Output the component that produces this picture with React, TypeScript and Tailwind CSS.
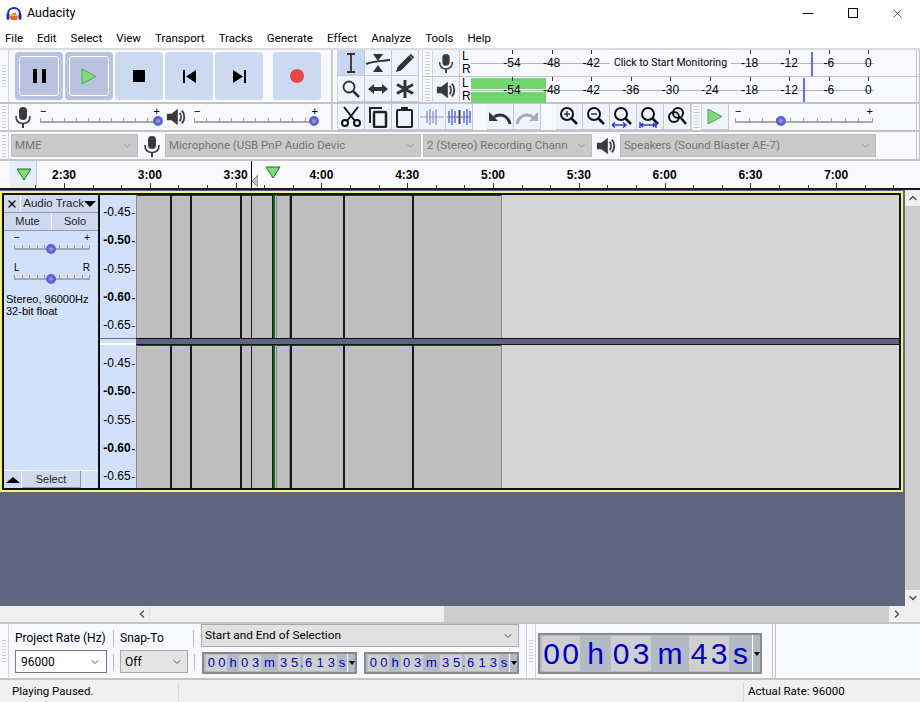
import { ChevronDown, ChevronLeft, ChevronRight, ChevronUp, X } from "lucide-react";
import type { ReactNode } from "react";

const RULER = ["2:30", "3:00", "3:30", "4:00", "4:30", "5:00", "5:30", "6:00", "6:30", "7:00"];
const MENU = ["File", "Edit", "Select", "View", "Transport", "Tracks", "Generate", "Effect", "Analyze", "Tools", "Help"];
const DB_BOTTOM = ["-54", "-48", "-42", "-36", "-30", "-24", "-18", "-12", "-6", "0"];
const TRACK_DB: [string, boolean][] = [["-0.45", false], ["-0.50", true], ["-0.55", false], ["-0.60", true], ["-0.65", false]];

type Cell = { t: string; w: number; light?: boolean };

const SMALL_TIME: Cell[] = [
  { t: "", w: 2 },
  { t: "00", w: 21, light: true },
  { t: "h", w: 12 },
  { t: "03", w: 22, light: true },
  { t: "m", w: 17 },
  { t: "35", w: 22, light: true },
  { t: ".", w: 3 },
  { t: "613", w: 34, light: true },
  { t: "s", w: 10 },
];

const BIG_TIME: Cell[] = [
  { t: "", w: 2 },
  { t: "00", w: 38, light: true },
  { t: "h", w: 31 },
  { t: "03", w: 40, light: true },
  { t: "m", w: 38 },
  { t: "43", w: 40, light: true },
  { t: "s", w: 23 },
];

// ---------------------------------------------------------------------------
// Small pieces
// ---------------------------------------------------------------------------

function Grip({ className = "w-[9px] border-r" }: { className?: string }) {
  return (
    <div className={`flex shrink-0 flex-col justify-center gap-[2px] self-stretch border-[#d4d4d4] px-[2px] ${className}`}>
      {Array.from({ length: 8 }).map((_, i) => (
        <div className="h-px bg-[#cfcfcf]" key={i} />
      ))}
    </div>
  );
}

function EndLines() {
  return <div className="ml-auto w-[4px] shrink-0 self-stretch border-x border-[#c4c4c4]" />;
}

function Mic({ size = 22 }: { size?: number }) {
  return (
    <svg fill="none" height={size} viewBox="0 0 22 22" width={size}>
      <rect fill="#3a3a3a" height="13" rx="4" width="8" x="7" y="1" />
      <path d="M4 10c0 5 3 7.500 7 7.500s7-2.500 7-7.500" stroke="#3a3a3a" strokeWidth="1.600" />
      <path d="M11 17.500V22" stroke="#3a3a3a" strokeWidth="2" />
    </svg>
  );
}

function Speaker({ size = 20 }: { size?: number }) {
  return (
    <svg fill="none" height={size} viewBox="0 0 22 22" width={size}>
      <path d="M1 7.500h5L13 2v18l-7-5.500H1z" fill="#3a3a3a" />
      <path d="M15 6.500c2 2.500 2 6.500 0 9M17.500 4c3.500 4 3.500 10 0 14" stroke="#3a3a3a" strokeWidth="2" />
    </svg>
  );
}

function Ticks({ className }: { className: string }) {
  return (
    <div className={`absolute right-0 left-0 flex justify-between ${className}`}>
      {Array.from({ length: 11 }).map((_, i) => (
        <div className="h-[3px] w-px bg-[#9a9a9a]" key={i} />
      ))}
    </div>
  );
}

function Knob({ className, left }: { className: string; left: number }) {
  return (
    <div
      className={`absolute h-[10px] w-[10px] rounded-full border-[3px] border-[#5a62e0] bg-[#9a9ab0] ${className}`}
      style={{ left }}
    />
  );
}

function TransportButton({ active, children }: { active?: boolean; children: ReactNode }) {
  return (
    <div
      className={`flex h-[48px] w-[48px] shrink-0 items-center justify-center rounded-[4px] ${active ? "bg-[#b9c3e0]" : "bg-[#cdd9f1]"}`}
    >
      {active ? (
        <div className="flex h-[40px] w-[40px] items-center justify-center rounded-[3px] border border-white">
          {children}
        </div>
      ) : (
        children
      )}
    </div>
  );
}

function ToolButton({ active, children }: { active?: boolean; children: ReactNode }) {
  return (
    <div
      className={`flex h-[26px] w-[27px] shrink-0 items-center justify-center border-r border-b border-[#c4c8d4] ${active ? "bg-[#c8d6f0]" : "bg-[#eef3fe]"}`}
    >
      {children}
    </div>
  );
}

function Slider({ thumb, width }: { thumb: number; width: number }) {
  return (
    <div className="relative h-[26px] shrink-0 font-['Liberation_Sans',sans-serif]" style={{ width }}>
      <span className="absolute top-[1px] left-0 text-[11px] leading-[12px] text-black">−</span>
      <span className="absolute top-[1px] right-0 text-[11px] leading-[12px] text-black">+</span>
      <Ticks className="top-[14px]" />
      <div className="absolute top-[17px] right-0 left-0 h-[2px] bg-[#a8a8a8]" />
      <Knob className="top-[12px]" left={thumb} />
    </div>
  );
}

function DeviceSelect({ label, width }: { label: string; width: number }) {
  return (
    <div
      className="flex h-[23px] shrink-0 items-center justify-between border border-[#bdbdbd] bg-[#c9c9c9] pr-[3px] pl-[3px] text-[11.500px] text-[#757575]"
      style={{ width }}
    >
      <span className="overflow-hidden whitespace-nowrap">{label}</span>
      <ChevronDown className="shrink-0 text-[#a8a8a8]" size={13} />
    </div>
  );
}

function DbLabel({ index, text }: { index: number; text: string }) {
  const x = 41 + index * 39.600;
  return (
    <>
      <div className="absolute top-0 h-[4px] w-px bg-[#333]" style={{ left: x }} />
      <span
        className="absolute top-[6px] -translate-x-1/2 font-['Liberation_Sans',sans-serif] text-[12px] leading-[14px] text-black"
        style={{ left: x }}
      >
        {text}
      </span>
    </>
  );
}

function Digits({ cells, big }: { cells: Cell[]; big?: boolean }) {
  return (
    <div
      className={`flex shrink-0 items-stretch border-2 border-[#8a8a8a] bg-[#b4b9c6] font-['Liberation_Sans',sans-serif] text-[#0000c0] ${big ? "h-[41px] w-[224px] text-[30px]" : "h-[22px] w-[155px] text-[13px]"}`}
    >
      <div className="flex flex-1 py-[1px]">
        {cells.map((c, i) => (
          <div className={`flex shrink-0 ${c.light ? "bg-[#cfcfcf]" : ""}`} key={i} style={{ width: c.w }}>
            {c.t.split("").map((ch, j) => (
              <span className="flex flex-1 items-center justify-center" key={j}>
                {ch}
              </span>
            ))}
          </div>
        ))}
      </div>
      <div className="flex w-[8px] shrink-0 items-center justify-center border-l border-white">
        <div className="h-0 w-0 border-x-[3px] border-t-[4px] border-x-transparent border-t-black" />
      </div>
    </div>
  );
}

function GreenTriangle() {
  return (
    <svg height="13" viewBox="0 0 16 13" width="16">
      <path d="M1 1h14L8 12z" fill="#7ddc78" stroke="#2f6b2c" />
    </svg>
  );
}

function PlayGlyph() {
  return (
    <svg height="17" viewBox="0 0 16 17" width="16">
      <path d="M1 1l14 7.500L1 16z" fill="#7ddc78" stroke="#5e9c5c" />
    </svg>
  );
}

function ZoomIcon({ sign, bar }: { sign?: "+" | "-"; bar?: "fit" | "sel" }) {
  return (
    <svg fill="none" height="22" viewBox="0 0 22 22" width="22">
      <circle cx="9" cy="8" r="6" stroke="#111" strokeWidth="2" />
      <path d="M13.500 12.500 19 18" stroke="#111" strokeWidth="2.500" />
      {sign && <path d="M6 8h6" stroke="#333" strokeWidth="1.500" />}
      {sign === "+" && <path d="M9 5v6" stroke="#333" strokeWidth="1.500" />}
      {bar === "fit" && <path d="M0 19h14M3 16.500 0 19l3 2.500M11 16.500l3 2.500-3 2.500" stroke="#2b3ccf" strokeWidth="1.500" />}
      {bar === "sel" && <path d="M1 19h16M1 16v6M17 16v6M4 17l-2 2 2 2M14 17l2 2-2 2" stroke="#2b3ccf" strokeWidth="1.500" />}
    </svg>
  );
}

function TrackSlider({ left, right, className }: { left: string; right: string; className: string }) {
  return (
    <>
      <div className={`flex h-[11px] justify-between pr-[8px] pl-[10px] text-[10px] leading-[11px] text-black ${className}`}>
        <span>{left}</span>
        <span>{right}</span>
      </div>
      <div className="relative mr-[8px] ml-[10px] h-[12px]">
        <Ticks className="top-[2px]" />
        <div className="absolute top-[5px] right-0 left-0 h-[2px] bg-[#a8a8a8]" />
        <Knob className="top-[1px]" left={32} />
      </div>
    </>
  );
}

// ---------------------------------------------------------------------------
// Regions
// ---------------------------------------------------------------------------

function TitleBar() {
  return (
    <div className="flex h-[26px] items-center bg-white">
      <svg className="ml-[6px]" height="16" viewBox="0 0 16 16" width="16">
        <path d="M2 9C2 1 14 1 14 9" fill="none" stroke="#1c2fb0" strokeWidth="2" />
        <rect fill="#1c2fb0" height="7" rx="2" width="3" x="0.500" y="8" />
        <rect fill="#1c2fb0" height="7" rx="2" width="3" x="12.500" y="8" />
        <path d="M4 11l1-2 1 1 1-3 1 2 1-2 1 2 1 1 1 1v1l-1 3H5l-1-3z" fill="#e8622a" />
        <path d="M4 10.500h8" stroke="#f4c92a" strokeWidth="1.200" />
      </svg>
      <span className="ml-[5px] text-[12.500px] text-black">Audacity</span>
      <div className="ml-auto flex h-full items-center">
        <div className="flex w-[45px] justify-center">
          <div className="h-px w-[10px] bg-black" />
        </div>
        <div className="flex w-[45px] justify-center">
          <div className="h-[10px] w-[10px] border border-black" />
        </div>
        <div className="flex w-[45px] justify-center">
          <X color="#000" size={15} strokeWidth={1} />
        </div>
      </div>
    </div>
  );
}

function MenuBar() {
  return (
    <div className="flex h-[22px] items-center gap-[14px] bg-white pt-[4px] pl-[5px] text-[11.500px] text-black">
      {MENU.map((m) => (
        <span key={m}>{m}</span>
      ))}
    </div>
  );
}

function TransportToolbar() {
  return (
    <div className="flex h-[54px] items-center border-r border-b-2 border-[#c4c4c4]">
      <Grip />
      <div className="ml-[6px] flex gap-[2px]">
        <TransportButton active>
          <div className="flex gap-[5px]">
            <div className="h-[14px] w-[4px] bg-black" />
            <div className="h-[14px] w-[4px] bg-black" />
          </div>
        </TransportButton>
        <TransportButton active>
          <PlayGlyph />
        </TransportButton>
        <TransportButton>
          <div className="h-[12px] w-[12px] bg-black" />
        </TransportButton>
        <TransportButton>
          <svg height="13" viewBox="0 0 13 13" width="13">
            <path d="M0 0h2v13H0zM13 0v13L3 6.500z" />
          </svg>
        </TransportButton>
        <TransportButton>
          <svg height="13" viewBox="0 0 13 13" width="13">
            <path d="M11 0h2v13h-2zM0 0v13l10-6.500z" />
          </svg>
        </TransportButton>
        <div className="ml-[8px]">
          <TransportButton>
            <div className="h-[14px] w-[14px] rounded-full bg-[#e84545]" />
          </TransportButton>
        </div>
      </div>
    </div>
  );
}

function MixerToolbar() {
  return (
    <div className="flex h-[28px] items-center border-r border-b-2 border-[#c4c4c4]">
      <Grip />
      <div className="flex w-[28px] justify-center">
        <Mic />
      </div>
      <div className="ml-[3px]">
        <Slider thumb={113} width={120} />
      </div>
      <div className="ml-[6px]">
        <Speaker />
      </div>
      <div className="ml-[8px]">
        <Slider thumb={115} width={124} />
      </div>
    </div>
  );
}

function ToolsToolbar() {
  return (
    <div className="flex h-[54px] w-[90px] shrink-0 border-b-2 border-[#c4c4c4]">
      <Grip className="w-[6px] border-x" />
      <div className="grid h-[52px] grid-cols-[repeat(3,27px)]">
        <ToolButton active>
          <svg height="20" viewBox="0 0 12 20" width="12">
            <path d="M2 1h8M2 19h8M6 1v18" fill="none" stroke="#333" strokeWidth="1.800" />
          </svg>
        </ToolButton>
        <ToolButton>
          <svg height="20" viewBox="0 0 26 20" width="26">
            <path d="M8 1h10l-5 7zM8 19h10l-5-7z" fill="#333" />
            <path d="M1 11c6-3 16-3 24-4" fill="none" stroke="#333" strokeWidth="2" />
          </svg>
        </ToolButton>
        <ToolButton>
          <svg height="20" viewBox="0 0 20 20" width="20">
            <path d="M1 19l1.500-5L14 2.500 17.500 6 6 17.500z" fill="#333" />
            <path d="M15 1.500l3.500 3.500" stroke="#333" strokeWidth="2" />
          </svg>
        </ToolButton>
        <ToolButton>
          <svg fill="none" height="20" viewBox="0 0 20 20" width="20">
            <circle cx="8" cy="8" r="5.500" stroke="#333" strokeWidth="1.800" />
            <path d="M12 12l6 6" stroke="#333" strokeWidth="2.500" />
          </svg>
        </ToolButton>
        <ToolButton>
          <svg height="14" viewBox="0 0 22 14" width="22">
            <path d="M1 7l6-5v3h8V2l6 5-6 5V9H7v3z" fill="#333" />
          </svg>
        </ToolButton>
        <ToolButton>
          <svg height="20" viewBox="0 0 20 20" width="20">
            <path d="M10 1v18M2 5.500l16 9M18 5.500l-16 9" stroke="#333" strokeWidth="3" />
          </svg>
        </ToolButton>
      </div>
    </div>
  );
}

function MeterRow({ icon, children, className }: { icon: ReactNode; children: ReactNode; className: string }) {
  return (
    <div className={`flex border-[#c4c4c4] ${className}`}>
      <Grip className="w-[11px] border-x" />
      <div className="flex w-[27px] shrink-0 items-center justify-center border-r border-[#c4c8d4] bg-[#eef3fe]">
        {icon}
      </div>
      <div className="flex w-[11px] shrink-0 flex-col pl-[2px] font-['Liberation_Sans',sans-serif] text-[12px] leading-[13px] text-black">
        <span>L</span>
        <span>R</span>
      </div>
      <div className="relative w-[403px] shrink-0">{children}</div>
      <EndLines />
    </div>
  );
}

function MeterToolbars() {
  return (
    <div className="flex min-w-0 flex-1 flex-col">
      <MeterRow className="h-[27px] border-b" icon={<Mic size={20} />}>
        <div className="absolute top-[13px] right-0 left-0 h-px bg-[#b4b4b4]" />
        {DB_BOTTOM.slice(0, 3).map((d, i) => (
          <DbLabel index={i} key={d} text={d} />
        ))}
        <span className="absolute top-[6px] left-[140px] w-[119px] bg-[#f7f9ff] text-center text-[10.500px] leading-[14px] whitespace-nowrap text-black outline outline-white">
          Click to Start Monitoring
        </span>
        {DB_BOTTOM.slice(6).map((d, i) => (
          <DbLabel index={i + 6} key={d} text={d} />
        ))}
        <div className="absolute top-[2px] left-[340px] h-[24px] w-[2px] bg-[#6a6af0]" />
      </MeterRow>
      <MeterRow className="h-[27px] border-b-2" icon={<Speaker />}>
        <div className="absolute top-[1px] left-0 h-[11px] w-[75px] bg-[#70d56c]" />
        <div className="absolute top-[15px] left-0 h-[11px] w-[75px] bg-[#70d56c]" />
        <div className="absolute top-[13px] right-0 left-0 h-px bg-[#b4b4b4]" />
        {DB_BOTTOM.map((d, i) => (
          <DbLabel index={i} key={d} text={d} />
        ))}
        <div className="absolute top-[1px] left-[332px] h-[24px] w-[2px] bg-[#6a6af0]" />
      </MeterRow>
    </div>
  );
}

function EditToolbar() {
  return (
    <div className="flex h-[28px] items-center border-b-2 border-[#c4c4c4]">
      <Grip className="w-[6px] border-x" />
      <ToolButton>
        <svg fill="none" height="22" viewBox="0 0 22 22" width="22">
          <circle cx="5" cy="17" r="3" stroke="#111" strokeWidth="2" />
          <circle cx="17" cy="17" r="3" stroke="#111" strokeWidth="2" />
          <path d="M7 15 18 1M15 15 4 1" stroke="#111" strokeWidth="2" />
        </svg>
      </ToolButton>
      <ToolButton>
        <svg fill="none" height="22" viewBox="0 0 22 22" width="22">
          <path d="M3 17V2h12" stroke="#222" strokeWidth="2" />
          <rect height="15" rx="1" stroke="#222" strokeWidth="2.500" width="12" x="7" y="6" />
        </svg>
      </ToolButton>
      <ToolButton>
        <svg fill="none" height="22" viewBox="0 0 22 22" width="22">
          <rect height="17" rx="1" stroke="#222" strokeWidth="2" width="15" x="3" y="4" />
          <rect fill="#222" height="4" width="7" x="7" y="1" />
        </svg>
      </ToolButton>
      <ToolButton>
        <svg fill="none" height="18" viewBox="0 0 26 18" width="26">
          <path d="M1 9h24" stroke="#9aa0b4" />
          <path d="M8 3v12M11 1v16M14 3v12M17 1v16" stroke="#8e9fd8" strokeWidth="1.500" />
        </svg>
      </ToolButton>
      <ToolButton>
        <svg fill="none" height="18" viewBox="0 0 26 18" width="26">
          <path d="M1 9h24" stroke="#6d74a8" />
          <path d="M3 3v12M6 1v16M9 3v12M18 3v12M21 1v16M24 3v12" stroke="#5b6fd8" strokeWidth="1.500" />
          <path d="M13.500 2v14" stroke="#444" strokeWidth="2" />
        </svg>
      </ToolButton>
      <div className="w-[14px] shrink-0" />
      <ToolButton>
        <svg fill="none" height="16" viewBox="0 0 24 16" width="24">
          <path d="M22 15C20 6 12 4 6 8" stroke="#333" strokeWidth="3" />
          <path d="M1 3v9h9z" fill="#333" />
        </svg>
      </ToolButton>
      <ToolButton>
        <svg fill="none" height="16" viewBox="0 0 24 16" width="24">
          <path d="M2 15C4 6 12 4 18 8" stroke="#aaa" strokeWidth="3" />
          <path d="M23 3v9h-9z" fill="#aaa" />
        </svg>
      </ToolButton>
      <div className="w-[15px] shrink-0" />
      <ToolButton><ZoomIcon sign="+" /></ToolButton>
      <ToolButton><ZoomIcon sign="-" /></ToolButton>
      <ToolButton><ZoomIcon bar="fit" /></ToolButton>
      <ToolButton><ZoomIcon bar="sel" /></ToolButton>
      <ToolButton>
        <svg fill="none" height="22" viewBox="0 0 22 22" width="22">
          <circle cx="8" cy="11" r="5" stroke="#111" strokeWidth="2" />
          <circle cx="12" cy="7" r="5" stroke="#111" strokeWidth="2" />
          <path d="M15 12l5 6" stroke="#111" strokeWidth="2.500" />
        </svg>
      </ToolButton>
      <Grip className="w-[11px] border-x" />
      <ToolButton>
        <PlayGlyph />
      </ToolButton>
      <div className="ml-[6px]">
        <Slider thumb={41} width={138} />
      </div>
      <EndLines />
    </div>
  );
}

function DeviceToolbar() {
  return (
    <div className="flex h-[29px] items-center border-b-2 border-[#c4c4c4]">
      <Grip />
      <div className="ml-[2px]">
        <DeviceSelect label="MME" width={127} />
      </div>
      <div className="flex w-[27px] justify-center">
        <Mic />
      </div>
      <DeviceSelect label="Microphone (USB PnP Audio Devic" width={256} />
      <div className="ml-[2px]">
        <DeviceSelect label="2 (Stereo) Recording Chann" width={169} />
      </div>
      <div className="flex w-[28px] justify-center">
        <Speaker />
      </div>
      <DeviceSelect label="Speakers (Sound Blaster AE-7)" width={256} />
      <EndLines />
    </div>
  );
}

function Ruler() {
  return (
    <div className="relative h-[29px] border-b-2 border-[#1a1a1a] bg-[#f7f9ff] font-['Liberation_Sans',sans-serif]">
      <div className="absolute top-0 left-[10px] flex h-[27px] w-[27px] items-center justify-center border-r border-[#c4c8d4] bg-[#e6eefc] pl-[1px]">
        <GreenTriangle />
      </div>
      {RULER.map((t, i) => (
        <span
          className="absolute top-[7px] -translate-x-1/2 text-[12px] leading-[14px] font-bold text-black"
          key={t}
          style={{ left: 64 + i * 85.800 }}
        >
          {t}
        </span>
      ))}
      {Array.from({ length: 31 }).map((_, i) => (
        <div
          className={`absolute bottom-0 w-px bg-[#333] ${i % 3 === 1 ? "h-[5px]" : "h-[3px]"}`}
          key={i}
          style={{ left: 35.400 + i * 28.600 }}
        />
      ))}
      <div className="absolute top-0 bottom-0 left-[251px] w-px bg-black" />
      <svg className="absolute top-[14px] left-[252px]" height="12" viewBox="0 0 6 12" width="6">
        <path d="M6 0v12L0 6z" fill="#c0c0c0" stroke="#888" />
      </svg>
      <div className="absolute top-[5px] left-[265px]">
        <GreenTriangle />
      </div>
    </div>
  );
}

function DbScale({ top }: { top: number }) {
  return (
    <div className="relative w-[36px] shrink-0 bg-[#d2e0fa]">
      {TRACK_DB.map(([t, bold], i) => (
        <span
          className={`absolute right-[1px] text-[12px] leading-[14px] text-black ${bold ? "font-bold" : ""}`}
          key={t}
          style={{ top: top + i * 28.250 }}
        >
          {t}
          <span className="ml-px text-[10px]">-</span>
        </span>
      ))}
    </div>
  );
}

function Clips() {
  return (
    <div className="relative flex-1 border-l border-[#8a8a8a] bg-[#d4d4d4]">
      <div className="absolute top-0 bottom-0 left-0 w-[365px] border-r border-[#8a8a8a] bg-[#bebebe]" />
      <div className="absolute top-0 left-0 h-px w-[364px] bg-[#2a2ab0]" />
      <div className="absolute top-0 bottom-0 left-[33px] w-[2px] bg-[#1a1a1a]" />
      <div className="absolute top-0 bottom-0 left-[53px] w-[2px] bg-[#1a1a1a]" />
      <div className="absolute top-0 bottom-0 left-[103px] w-[2px] bg-[#1a1a1a]" />
      <div className="absolute top-0 bottom-0 left-[114px] w-px bg-[#2a1a1a]" />
      <div className="absolute top-0 bottom-0 left-[135px] w-px bg-[#1a1a1a]" />
      <div className="absolute top-0 bottom-0 left-[136px] w-[2px] bg-[#0e6a18]" />
      <div className="absolute top-0 bottom-0 left-[139px] w-px bg-[#8a8a8a]" />
      <div className="absolute top-0 bottom-0 left-[152px] w-px bg-[#8a8a8a]" />
      <div className="absolute top-0 bottom-0 left-[153px] w-[2px] bg-[#1a1a1a]" />
      <div className="absolute top-0 bottom-0 left-[206px] w-[2px] bg-[#1a1a1a]" />
      <div className="absolute top-0 bottom-0 left-[275px] w-[2px] bg-[#1a1a1a]" />
    </div>
  );
}

function TrackPanel() {
  return (
    <div className="flex w-[96px] shrink-0 flex-col border-r-2 border-[#111] bg-[#d2e0fa] text-[11px] text-[#222]">
      <div className="flex h-[18px] shrink-0 border-b border-[#8e96ac] bg-[#cfd9f0]">
        <div className="flex w-[19px] items-center justify-center border-r border-[#f4f6ff]">
          <X color="#000" size={12} strokeWidth={2.500} />
        </div>
        <div className="flex flex-1 items-center justify-between px-[2px]">
          <span className="whitespace-nowrap text-[11.500px]">Audio Track</span>
          <div className="h-0 w-0 shrink-0 border-x-[6px] border-t-[6px] border-x-transparent border-t-black" />
        </div>
      </div>
      <div className="flex h-[18px] shrink-0 border-b border-[#8e96ac] bg-[#cfd9f0]">
        <div className="flex w-[48px] items-center justify-center border-r border-[#f4f6ff]">Mute</div>
        <div className="flex flex-1 items-center justify-center">Solo</div>
      </div>
      <TrackSlider className="mt-[1px]" left="−" right="+" />
      <TrackSlider className="mt-[7px]" left="L" right="R" />
      <div className="mt-[8px] pl-[2px] text-[11px] leading-[12px] text-black">
        Stereo, 96000Hz
        <br />
        32-bit float
      </div>
      <div className="mt-auto flex h-[18px] shrink-0 border-t border-[#f4f6ff]">
        <div className="flex w-[18px] items-center justify-center border-r border-[#f4f6ff] bg-[#cfd9f0]">
          <div className="h-0 w-0 border-x-[7px] border-b-[6px] border-x-transparent border-b-black" />
        </div>
        <div className="flex w-[59px] items-center justify-center border-r border-b border-[#8e96ac] bg-[#cfd9f0]">
          Select
        </div>
      </div>
    </div>
  );
}

function Track() {
  return (
    <div className="flex h-[301px] w-[903px] border-y-2 border-[#f2f27a] bg-[#f2f27a] px-[2px] font-['Liberation_Sans',sans-serif]">
      <div className="flex h-full w-full border-2 border-[#111]">
        <TrackPanel />
        <div className="flex min-w-0 flex-1 flex-col">
          <div className="flex h-[143px] shrink-0">
            <DbScale top={10} />
            <Clips />
          </div>
          <div className="flex h-[7px] shrink-0">
            <div className="w-[36px] border-t border-b-2 border-t-[#666] border-b-white bg-[#d2e0fa]" />
            <div className="flex-1 border-y border-[#111] bg-[#606480]" />
          </div>
          <div className="flex min-h-0 flex-1">
            <DbScale top={11} />
            <Clips />
          </div>
        </div>
      </div>
    </div>
  );
}

function TrackArea() {
  return (
    <div className="flex h-[416px]">
      <div className="flex min-w-0 flex-1 flex-col bg-[#606480] pt-[1px]">
        <Track />
      </div>
      <div className="flex w-[15px] shrink-0 flex-col bg-[#f0f0f0]">
        <div className="flex h-[16px] shrink-0 items-center justify-center">
          <ChevronUp className="text-[#555]" size={12} strokeWidth={3} />
        </div>
        <div className="flex-1 bg-[#cdcdcd]" />
        <div className="flex h-[16px] shrink-0 items-center justify-center">
          <ChevronDown className="text-[#555]" size={12} strokeWidth={3} />
        </div>
      </div>
    </div>
  );
}

function HScrollBar() {
  return (
    <div className="flex h-[16px] items-center bg-[#f0f0f0]">
      <div className="ml-[134px] flex h-full w-[16px] items-center justify-center border-r border-[#e0e0e0]">
        <ChevronLeft className="text-[#555]" size={12} strokeWidth={3} />
      </div>
      <div className="ml-[294px] h-full w-[445px] bg-[#cdcdcd]" />
      <div className="flex w-[16px] justify-center">
        <ChevronRight className="text-[#555]" size={12} strokeWidth={3} />
      </div>
    </div>
  );
}

function SelectionBar() {
  return (
    <div className="flex h-[58px] border-y-2 border-[#c4c4c4] bg-[#f7f9ff] text-[12px] text-black">
      <Grip />
      <div className="flex w-[192px] shrink-0 flex-col pl-[6px]">
        <div className="flex h-[26px] items-center pt-[2px]">
          <span className="w-[98px] whitespace-nowrap">Project Rate (Hz)</span>
          <span className="h-[16px] w-px bg-[#bbb]" />
          <span className="ml-[6px] w-[73px]">Snap-To</span>
          <span className="h-[16px] w-px bg-[#bbb]" />
        </div>
        <div className="flex items-center">
          <div className="flex h-[23px] w-[92px] items-center justify-between border border-[#7a7a7a] bg-white px-[5px]">
            <span>96000</span>
            <ChevronDown className="text-[#555]" size={12} />
          </div>
          <span className="ml-[6px] h-[16px] w-px bg-[#bbb]" />
          <div className="ml-[6px] flex h-[23px] w-[68px] items-center justify-between border border-[#aaa] bg-[#e4e4e4] px-[4px]">
            <span>Off</span>
            <ChevronDown className="text-[#555]" size={12} />
          </div>
          <span className="ml-[6px] h-[16px] w-px bg-[#bbb]" />
        </div>
      </div>
      <div className="flex w-[325px] shrink-0 flex-col">
        <div className="flex h-[23px] w-[318px] items-center justify-between border border-[#aaa] bg-[#e1e1e1] pr-[4px] pl-[3px] text-[11.800px]">
          <span>Start and End of Selection</span>
          <ChevronDown className="text-[#555]" size={12} />
        </div>
        <div className="mt-[5px] ml-[1px] flex gap-[7px]">
          <Digits cells={SMALL_TIME} />
          <Digits cells={SMALL_TIME} />
        </div>
      </div>
      <Grip className="w-[10px] border-x" />
      <div className="flex w-[226px] shrink-0 items-start pt-[9px] pl-[2px]">
        <Digits big cells={BIG_TIME} />
      </div>
      <div className="ml-[10px] w-[4px] shrink-0 border-x border-[#c4c4c4]" />
    </div>
  );
}

function StatusBar() {
  return (
    <div className="flex h-[22px] items-center bg-[#f0f0f0] pt-[2px] text-[11.500px] text-black">
      <span className="flex h-full w-[179px] items-center border-r border-[#d8d8d8] pl-[12px]">Playing Paused.</span>
      <span className="ml-[564px] flex h-full items-center border-l border-[#d8d8d8] pl-[4px]">Actual Rate: 96000</span>
    </div>
  );
}

// ---------------------------------------------------------------------------
// App
// ---------------------------------------------------------------------------

export default function App() {
  return (
    <div className="flex h-[702px] w-[920px] flex-col overflow-hidden bg-[#f7f9ff] font-['Roboto',sans-serif]">
      <TitleBar />
      <MenuBar />
      <div className="flex border-t-2 border-[#dcdcdc]">
        <div className="flex w-[332px] shrink-0 flex-col">
          <TransportToolbar />
          <MixerToolbar />
        </div>
        <div className="flex min-w-0 flex-1 flex-col">
          <div className="flex">
            <ToolsToolbar />
            <MeterToolbars />
          </div>
          <EditToolbar />
        </div>
      </div>
      <DeviceToolbar />
      <Ruler />
      <TrackArea />
      <HScrollBar />
      <SelectionBar />
      <StatusBar />
    </div>
  );
}
